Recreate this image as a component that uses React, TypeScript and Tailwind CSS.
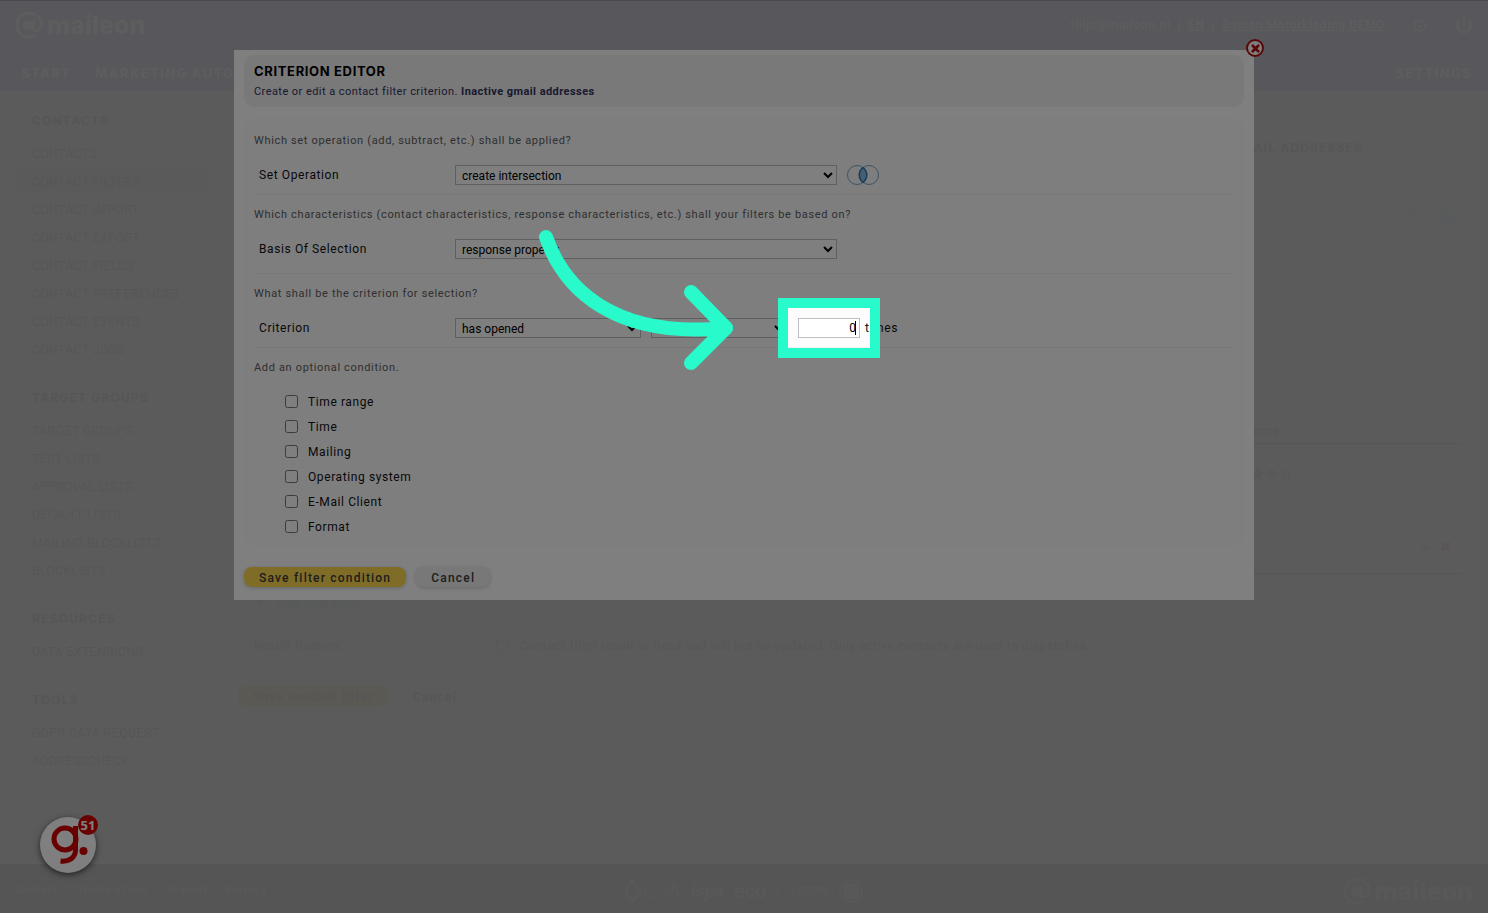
import { useState } from "react"
import { Info, Plus, Power, RotateCw, Star, Target, X } from "lucide-react"

const menu = [
  {
    title: "Contacts",
    items: [
      "Contacts",
      "Contact filters",
      "Contact import",
      "Contact export",
      "Contact fields",
      "Contact preferences",
      "Contact events",
      "Contact jobs",
    ],
  },
  {
    title: "Target groups",
    items: ["Target groups", "Test lists", "Approval lists", "Default lists", "Mailing blocklists", "Blocklists"],
  },
  { title: "Resources", items: ["Data extensions"] },
  { title: "Tools", items: ["GDPR data request", "Addresscheck"] },
]

const conditions = ["Time range", "Time", "Mailing", "Operating system", "E-Mail Client", "Format"]

const selectClass = "h-5 border border-[#bfbfc4] bg-white pt-px pr-[2px] pl-[2px] text-xs text-black"
const hintClass = "text-[11px] leading-[22px] tracking-[0.06em] text-[#606060]"
const labelClass = "w-[201px] pl-[5px] text-xs tracking-wider"

function MaileonLogo() {
  return (
    <span className="flex items-center gap-1">
      <svg width="28" height="28" viewBox="0 0 28 28" fill="none" aria-hidden="true">
        <path
          d="M19 25c-8 3-17-1-17-11C2 6 8 2 14 2s12 4 12 11c0 5-3 7-6 7-2 0-3-1-3-3"
          stroke="currentColor"
          strokeWidth="3"
          strokeLinecap="round"
        />
        <path d="M7 15c1-5 6-7 10-5l4-1-1 9-4-1-3 4-1-4-2 2-1-3z" fill="currentColor" />
      </svg>
      <span className="font-['Inter',sans-serif] text-[25px] leading-7 font-extrabold">maileon</span>
    </span>
  )
}

function Header() {
  return (
    <header className="h-[91px] border-t border-[#949299] bg-[#b0aeb8] text-[#bababa]">
      <div className="flex h-12 items-center justify-between pr-[15px] pl-[15px]">
        <MaileonLogo />
        <div className="flex items-center text-xs font-bold tracking-wider">
          <span>thijs@maileon.nl</span>
          <span className="mx-[7px]">|</span>
          <a href="#" className="underline">EN</a>
          <span className="mx-[7px]">|</span>
          <a href="#" className="underline">Damen Motorkleding DEMO</a>
          <button type="button" aria-label="Info" className="ml-7">
            <Info size={13} strokeWidth={3} />
          </button>
          <button type="button" aria-label="Log out" className="ml-[29px]">
            <Power size={18} strokeWidth={3} />
          </button>
        </div>
      </div>
      <nav className="flex h-12 items-center gap-6 pt-[2px] pr-4 pl-[21px] font-['Inter',sans-serif] text-[13px] font-extrabold tracking-widest uppercase">
        <a href="#">Start</a>
        <a href="#">Marketing auto</a>
        <a href="#" className="ml-auto">Settings</a>
      </nav>
    </header>
  )
}

function Sidebar() {
  return (
    <aside className="flex w-[208px] shrink-0 flex-col gap-[19px] pt-[13px] pl-4 uppercase">
      {menu.map((group) => (
        <div key={group.title}>
          <h3 className="flex h-[34px] items-center border-b border-[#b3b3b3] pt-px pl-4 font-['Inter',sans-serif] text-xs font-bold tracking-widest text-[#acacac]">
            {group.title}
          </h3>
          <ul className="text-xs font-light tracking-wider text-[#aaaaaa]">
            {group.items.map((item) => (
              <li
                key={item}
                className={`flex h-7 items-center pt-[3px] pl-4 ${item === "Contact filters" ? "bg-[#b4b4b4]" : ""}`}
              >
                <a href="#">{item}</a>
              </li>
            ))}
          </ul>
        </div>
      ))}
    </aside>
  )
}

function FilterPage() {
  return (
    <main className="flex-1 pt-[46px] pr-[26px] pl-[30px] text-xs tracking-wider text-[#aeaeae]">
      <h2 className="pr-[99px] text-right font-['Inter',sans-serif] text-xs leading-[22px] font-semibold tracking-widest text-[#acacac] uppercase">
        Inactive gmail addresses
      </h2>
      <div className="mt-12 flex justify-end gap-4 pr-[6px] text-[#b0b5b8]">
        <RotateCw size={22} />
        <Target size={22} />
      </div>
      <div className="mt-[190px] flex h-[25px] items-center justify-end border-b border-[#acacac] pr-[183px]">
        <span className="font-bold">Score</span>
      </div>
      <div className="flex h-[60px] items-center justify-end gap-[2px] pr-[170px] text-[#b4b1ac]">
        <Star size={12} fill="currentColor" />
        <Star size={12} fill="currentColor" />
        <Star size={12} />
      </div>
      <div className="flex h-[70px] items-center justify-end gap-[6px] border-b border-[#acacac] pt-4 pr-[10px]">
        <Plus size={14} strokeWidth={4} className="text-[#adb2b8]" />
        <X size={13} strokeWidth={4} className="text-[#b1aaa8]" />
      </div>
      <div className="mt-[18px] flex h-5 items-center gap-3 pl-4 text-[#aeb2b4]">
        <Plus size={12} strokeWidth={3} />
        <a href="#" className="font-bold underline">Add new filter</a>
      </div>
      <label className="mt-6 flex h-5 items-center pl-4">
        <span className="w-[242px]">Result fixation:</span>
        <input type="checkbox" className="h-3 w-3 appearance-none border border-[#b0b0b0]" />
        <span className="ml-3">
          Contact filter result is fixed and will not be updated. Only active contacts are used in dispatches.
        </span>
      </label>
      <div className="mt-[30px] flex gap-2 font-medium tracking-widest text-[#acacac]">
        <button type="button" className="h-5 w-[151px] rounded-lg bg-[#b6b2a8] pt-px">Save contact filter</button>
        <button type="button" className="h-5 px-4 pt-px">Cancel</button>
      </div>
    </main>
  )
}

function Footer() {
  return (
    <footer className="grid h-[49px] grid-cols-3 items-center bg-[#aaaaaa] px-[15px] pt-1 text-[#b1b1b1]">
      <div className="flex gap-2 text-[11px] font-bold tracking-wider">
        <a href="#">Contact</a>
        <span>|</span>
        <a href="#">Terms of use</a>
        <span>|</span>
        <a href="#">Imprint</a>
        <span>|</span>
        <a href="#">Privacy</a>
      </div>
      <div className="flex items-center justify-center gap-[10px]">
        <span className="flex items-center gap-[2px] text-xl leading-6 font-light">
          <svg width="17" height="26" viewBox="0 0 17 26" fill="none" stroke="currentColor" strokeWidth="3" aria-hidden="true">
            <path d="M8 3 15 11v4L8 23 2 15v-4z" />
          </svg>
          CSΛ
        </span>
        <span className="text-lg leading-6 font-black italic">ispa</span>
        <span className="text-xl leading-6 font-bold">eco</span>
        <span className="flex items-center gap-[2px] text-xs font-bold">
          <svg width="18" height="22" viewBox="0 0 18 22" fill="none" aria-hidden="true">
            <circle cx="9" cy="11" r="8" stroke="currentColor" strokeWidth="2" strokeDasharray="2 2" />
          </svg>
          GDPR
        </span>
        <svg width="26" height="30" viewBox="0 0 26 30" fill="none" stroke="currentColor" aria-hidden="true">
          <circle cx="13" cy="15" r="11" strokeWidth="2" />
          <circle cx="13" cy="15" r="8" fill="currentColor" />
        </svg>
      </div>
      <div className="flex justify-end">
        <MaileonLogo />
      </div>
    </footer>
  )
}

function GuideWidget() {
  return (
    <button
      type="button"
      aria-label="Open guides"
      className="absolute bottom-10 left-10 h-14 w-14 rounded-full bg-white shadow-[0_2px_6px_rgba(0,0,0,0.6)]"
    >
      <svg width="56" height="56" viewBox="0 0 56 56" fill="none" stroke="#d00000" aria-hidden="true">
        <circle cx="25" cy="22" r="11" strokeWidth="5" />
        <path d="M35.500 9v24c0 8-7 12-15 11" strokeWidth="5" />
        <circle cx="43.500" cy="34" r="4" fill="#d00000" stroke="none" />
      </svg>
      <span className="absolute -top-[2px] -right-[2px] h-5 w-5 rounded-full bg-[#d00000] text-center font-['Open_Sans',sans-serif] text-[13px] leading-5 font-bold text-white">
        51
      </span>
    </button>
  )
}

function IntersectionIcon() {
  return (
    <svg width="32" height="22" viewBox="0 0 32 22" fill="none" aria-hidden="true">
      <circle cx="10" cy="11" r="9.500" stroke="#74a8cc" />
      <circle cx="22" cy="11" r="9.500" stroke="#74a8cc" />
      <path d="M16 3.500c5 4 5 11 0 15c-5-4-5-11 0-15z" fill="#8cbce0" stroke="#2478bc" strokeWidth="1.500" />
    </svg>
  )
}

// Dims everything outside the frame and points at it with an arrow
function Spotlight() {
  return (
    <>
      <div className="pointer-events-none absolute -top-5 -left-5 z-10 h-[60px] w-[102px] border-[10px] border-[#28facb] shadow-[0_0_0_3000px_rgba(0,0,0,0.5)]" />
      <svg
        className="pointer-events-none absolute -top-[98px] -left-[268px] z-20 max-w-none"
        width="220"
        height="160"
        viewBox="0 0 220 160"
        fill="none"
        stroke="#28facb"
        strokeWidth="14"
        strokeLinecap="round"
        strokeLinejoin="round"
        aria-hidden="true"
      >
        <path d="M16 17C34 69 84 119 196 108" />
        <path d="M161 72l35 36-35 35" />
      </svg>
    </>
  )
}

function CriterionEditor() {
  const [times, setTimes] = useState("0")

  return (
    <div role="dialog" aria-labelledby="editor-title" className="relative mx-auto w-full max-w-[1020px] bg-white px-[10px] pt-[5px] pb-[13px]">
      <button
        type="button"
        aria-label="Close"
        className="absolute -top-[11px] -right-[10px] flex h-[18px] w-[18px] items-center justify-center rounded-full border-2 border-[#b01010] bg-white text-[#b01010]"
      >
        <X size={11} strokeWidth={6} />
      </button>

      <div className="h-[52px] rounded-[10px] bg-[#f3f3f3] px-[10px] pt-[6px]">
        <h1 id="editor-title" className="font-['Inter',sans-serif] text-[13px] leading-5 font-bold tracking-wider text-black uppercase">
          Criterion editor
        </h1>
        <p className="text-[11px] leading-[22px] tracking-[0.04em] text-[#343260]">
          Create or edit a contact filter criterion. <b>Inactive gmail addresses</b>
        </p>
      </div>

      <div className="mt-[10px] rounded-[10px] bg-[#fcfcfc] px-[10px] pt-1 pb-2">
        <section className="border-b border-[#f0f0f0] py-[9px]">
          <p className={hintClass}>Which set operation (add, subtract, etc.) shall be applied?</p>
          <div className="mt-[13px] flex h-5 items-center">
            <label htmlFor="operation" className={labelClass}>Set Operation</label>
            <select id="operation" className={`w-[382px] ${selectClass}`}>
              <option>create intersection</option>
            </select>
            <span className="ml-[10px]">
              <IntersectionIcon />
            </span>
          </div>
        </section>

        <section className="border-b border-[#f0f0f0] pt-[9px] pb-[14px]">
          <p className={hintClass}>
            Which characteristics (contact characteristics, response characteristics, etc.) shall your filters be based on?
          </p>
          <div className="mt-[13px] flex h-5 items-center">
            <label htmlFor="basis" className={labelClass}>Basis Of Selection</label>
            <select id="basis" className={`w-[382px] ${selectClass}`}>
              <option>response property</option>
            </select>
          </div>
        </section>

        <section className="border-b border-[#f0f0f0] py-[9px]">
          <p className={hintClass}>What shall be the criterion for selection?</p>
          <div className="mt-[13px] flex h-5 items-center">
            <label htmlFor="criterion" className={labelClass}>Criterion</label>
            <select id="criterion" className={`w-[186px] ${selectClass}`}>
              <option>has opened</option>
            </select>
            <select aria-label="Comparison" className={`ml-[10px] w-[137px] ${selectClass}`}>
              <option>at most</option>
            </select>
            <div className="relative ml-[10px] h-5">
              <input
                id="times"
                type="text"
                value={times}
                onChange={(e) => setTimes(e.target.value)}
                className="block h-5 w-[62px] border border-[#bfbfc4] bg-white pr-[3px] text-right text-xs text-black"
              />
              <span className="absolute top-[3px] right-1 h-[14px] w-px bg-black" />
              <Spotlight />
            </div>
            <label htmlFor="times" className="ml-[5px] text-xs tracking-wider">times</label>
          </div>
        </section>

        <section className="pt-[9px]">
          <p className={hintClass}>Add an optional condition.</p>
          <div className="mt-[10px] pl-[31px]">
            {conditions.map((condition) => (
              <label key={condition} className="flex h-[25px] items-center gap-[10px] text-xs tracking-wider">
                <input type="checkbox" className="h-[13px] w-[13px]" />
                {condition}
              </label>
            ))}
          </div>
        </section>
      </div>

      <div className="mt-5 flex gap-[10px] text-xs font-medium tracking-widest text-[#3c3c3c]">
        <button type="button" className="h-5 rounded-lg bg-[#ffdb4f] px-[15px] pt-px shadow-[0_1px_4px_rgba(0,0,0,0.2)]">
          Save filter condition
        </button>
        <button type="button" className="h-5 rounded-lg bg-[#f0f0f0] px-[15px] pt-px shadow-[0_1px_4px_rgba(0,0,0,0.2)]">
          Cancel
        </button>
      </div>
    </div>
  )
}

export default function App() {
  return (
    <div className="relative flex min-h-screen flex-col overflow-hidden bg-[#b6b6b6] font-['Roboto',sans-serif] text-[#101014]">
      <Header />
      <div className="flex flex-1">
        <Sidebar />
        <FilterPage />
      </div>
      <Footer />
      <GuideWidget />
      <div className="absolute inset-x-0 top-[50px]">
        <CriterionEditor />
      </div>
    </div>
  )
}
